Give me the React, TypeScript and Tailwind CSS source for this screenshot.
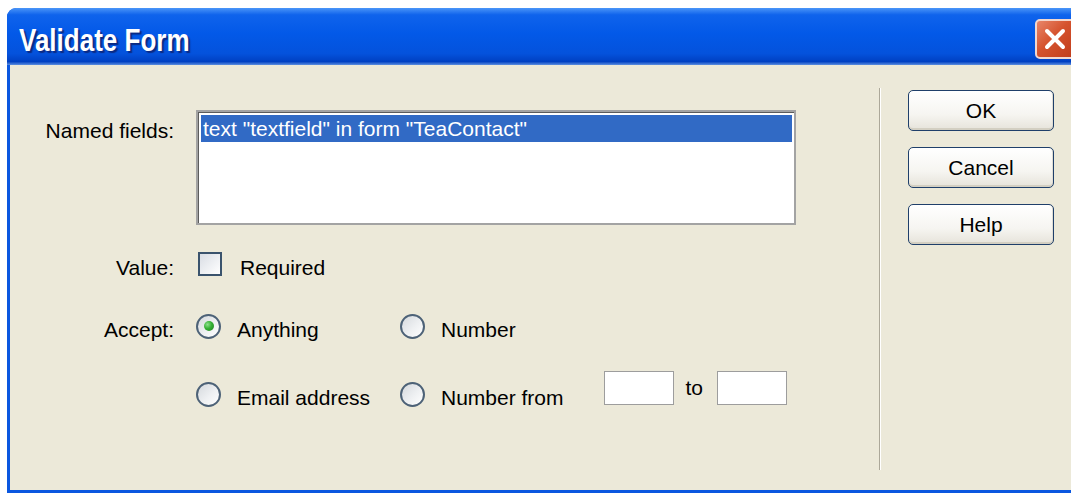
import React from 'react'

function Radio({ checked }: { checked?: boolean }) {
    return (
        <span className="w-[25px] h-[25px] shrink-0 rounded-full border-2 border-[#4d6277] bg-[linear-gradient(135deg,#d5d9dd_0%,#eef0f2_55%,#ffffff_100%)] flex items-center justify-center">
            {checked && (
                <span className="w-[10px] h-[10px] rounded-full bg-[radial-gradient(circle_at_35%_35%,#8ee08e_0%,#35b035_45%,#1e7d1e_100%)]" />
            )}
        </span>
    );
}

function Option({ label, checked }: { label: string; checked?: boolean }) {
    return (
        <label className="flex items-center gap-[16px]">
            <Radio checked={checked} />
            <span className="pt-[8px]">{label}</span>
        </label>
    );
}

function NumBox() {
    return <span className="block w-[70px] h-[34px] bg-white border border-[#9d9d9d]" />;
}

function DlgButton({ children }: { children: React.ReactNode }) {
    return (
        <button className="w-[146px] h-[41px] rounded-[5px] border border-[#1f3f6a] bg-[linear-gradient(180deg,#ffffff_0%,#f6f5f1_60%,#e6e3da_100%)] shadow-[inset_0_-2px_0_#d3cfc2,inset_-1px_0_0_#e0ddd3] text-black text-[21px] leading-none">
            {children}
        </button>
    );
}

export default function App() {
    return (
        <div className="w-[1071px] h-[493px] overflow-hidden bg-white pl-[7px] pt-[8px] font-['Liberation_Sans',Arial,sans-serif] text-black">
            <div className="w-[1072px] h-[485px] flex flex-col rounded-t-[9px] bg-[#0a57e0] overflow-hidden">
                {/* title bar */}
                <div className="h-[57px] shrink-0 flex items-center justify-between pl-[12px] pr-[4px] bg-[linear-gradient(180deg,#4a95f8_0%,#0f63ec_12%,#0359e8_45%,#0452dc_80%,#0040c2_94%,#5d8fe0_100%)]">
                    <span className="inline-block mt-[6px] scale-y-[1.18] origin-center text-[26px] font-bold text-white leading-none [text-shadow:2px_2px_1px_#0b2a84]">Validate Form</span>
                    <span className="w-[40px] h-[40px] mt-[5px] rounded-[5px] border-2 border-[#f3d8cf] bg-[linear-gradient(135deg,#e8866a_0%,#d5532e_45%,#c03d1c_100%)] flex items-center justify-center">
                        <svg width="24" height="24" viewBox="0 0 24 24">
                            <path d="M4 4 L20 20 M20 4 L4 20" stroke="white" strokeWidth="4" strokeLinecap="round" />
                        </svg>
                    </span>
                </div>

                {/* dialog body */}
                <div className="flex-1 mx-[3px] mb-[3px] bg-[#ece9d9] flex text-[21px] leading-[24px]">
                    <div className="w-[869px] shrink-0 pt-[45px] flex flex-col">
                        <div className="flex">
                            <div className="w-[164px] text-right pt-[9px]">Named fields:</div>
                            <div className="ml-[22px] w-[600px] h-[115px] border-2 border-[#a3a3a3] bg-white">
                                <div className="h-full border-l border-t border-[#5c5c5c] p-[2px]">
                                    <div className="h-[27px] bg-[#316ac5] text-white pl-[2px] pt-[2px] leading-[24px] whitespace-nowrap">
                                        text "textfield" in form "TeaContact"
                                    </div>
                                </div>
                            </div>
                        </div>

                        <div className="flex items-center mt-[23px]">
                            <div className="w-[164px] text-right pt-[8px]">Value:</div>
                            <label className="ml-[24px] flex items-center gap-[18px]">
                                <span className="w-[24px] h-[24px] border-2 border-[#3a536d] bg-[linear-gradient(135deg,#d9dde4_0%,#eef0f3_55%,#ffffff_100%)]" />
                                <span className="pt-[8px]">Required</span>
                            </label>
                        </div>

                        <div className="flex mt-[30px]">
                            <div className="w-[164px] text-right pt-[8px]">Accept:</div>
                            <div className="ml-[22px] flex flex-col gap-[36px]">
                                <div className="flex items-center">
                                    <div className="w-[204px]"><Option label="Anything" checked /></div>
                                    <Option label="Number" />
                                </div>
                                <div className="flex items-center">
                                    <div className="w-[204px]"><Option label="Email address" /></div>
                                    <Option label="Number from" />
                                    <div className="ml-[40px] mt-[-12px] flex items-center">
                                        <NumBox />
                                        <span className="ml-[12px] mr-[14px]">to</span>
                                        <NumBox />
                                    </div>
                                </div>
                            </div>
                        </div>
                    </div>

                    {/* etched separator */}
                    <div className="w-[2px] mt-[23px] mb-[20px] border-l border-[#aca899] bg-white" />

                    <div className="pl-[27px] pt-[25px] flex flex-col gap-[16px]">
                        <DlgButton>OK</DlgButton>
                        <DlgButton>Cancel</DlgButton>
                        <DlgButton>Help</DlgButton>
                    </div>
                </div>
            </div>
        </div>
    );
}
